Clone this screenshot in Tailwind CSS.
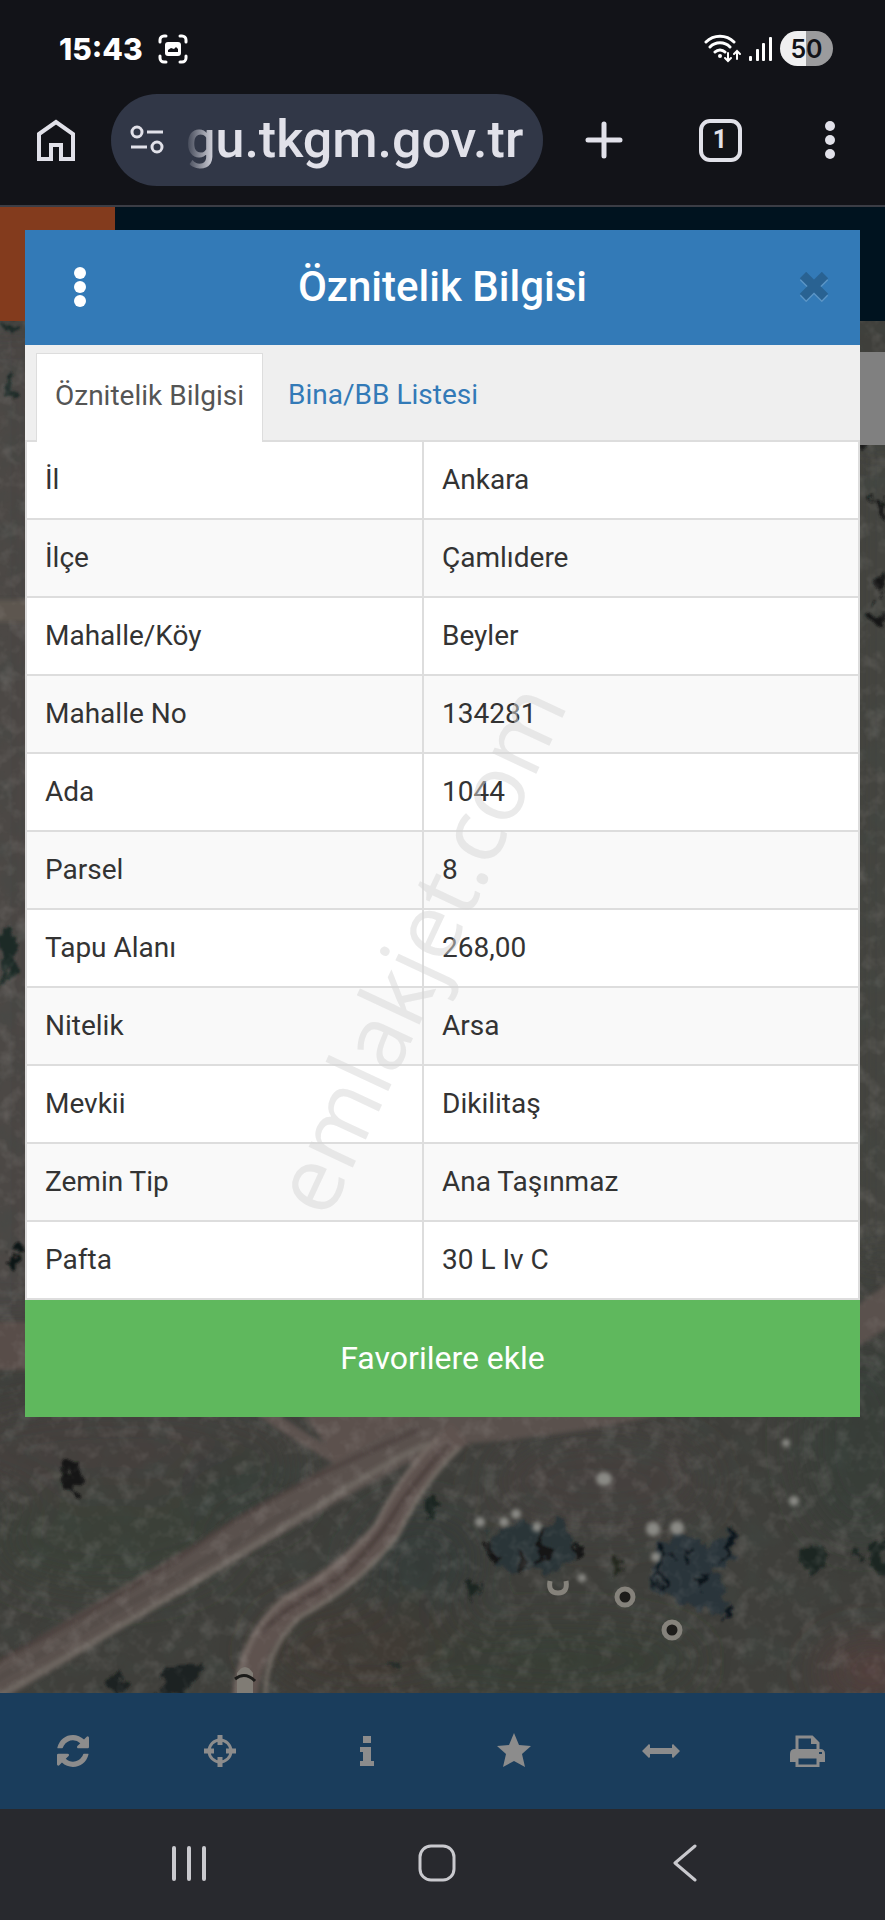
<!DOCTYPE html>
<html lang="tr">
<head>
    <meta charset="UTF-8">
    <meta name="viewport" content="width=device-width, initial-scale=1.0">
    <title>Öznitelik Bilgisi</title>
    <script src="https://cdn.jsdelivr.net/npm/@tailwindcss/browser@4"></script>
</head>
<body class="min-h-screen flex flex-col bg-[#121318] font-['Roboto',sans-serif] text-[#333]">

    <!-- Phone status bar -->
    <div class="h-[94px] pt-[3px] pl-[59px] pr-[52px] flex items-center justify-between text-white">
        <div class="flex items-center gap-[15px]">
            <span class="font-['Inter',sans-serif] font-extrabold text-[30px] leading-9">15:43</span>
            <svg class="w-[30px] h-[30px]" viewBox="0 0 30 30" fill="none" stroke="currentColor" stroke-width="3" stroke-linecap="round">
                <path d="M2 8V6a4 4 0 0 1 4-4h2M22 2h2a4 4 0 0 1 4 4v2M28 22v2a4 4 0 0 1-4 4h-2M8 28H6a4 4 0 0 1-4-4v-2"/>
                <rect x="7" y="8" width="16" height="14" rx="3" fill="currentColor" stroke="none"/>
                <path d="M10 18v-2l3-2 3 1 2-2 2 2v3z" fill="#121318" stroke="none"/>
            </svg>
        </div>
        <div class="flex items-center gap-[7px]">
            <svg class="w-[38px] h-[29px]" viewBox="0 0 38 29" fill="none" stroke="currentColor" stroke-width="3" stroke-linecap="round">
                <path d="M2 8a20 20 0 0 1 28 0M6 13a14 14 0 0 1 20 0M11 18a7 7 0 0 1 10 0"/>
                <circle cx="16" cy="22" r="2" fill="currentColor" stroke="none"/>
                <path d="M24 19v7M21 24l3 3 3-3M33 25v-7M30 20l3-3 3 3" stroke-width="2"/>
            </svg>
            <svg class="w-6 h-6" viewBox="0 0 24 24" fill="currentColor">
                <rect x="0" y="19" width="3" height="5" rx="1"/>
                <rect x="7" y="12" width="3" height="12" rx="1"/>
                <rect x="13" y="6" width="3" height="18" rx="1"/>
                <rect x="20" y="0" width="3" height="24" rx="1"/>
            </svg>
            <span class="w-[53px] h-[35px] rounded-full bg-linear-to-r from-[#efeff0] from-50% to-[#9b9b9d] to-50% flex items-center justify-center font-['Inter',sans-serif] font-semibold text-[25px] leading-8 text-[#121318]">50</span>
        </div>
    </div>

    <!-- Browser toolbar -->
    <header class="pb-[19px] border-b-2 border-[#3b3d45] flex items-center text-[#e1e1e9]">
        <button class="w-[111px] shrink-0 flex justify-start pl-9" aria-label="Ana sayfa">
            <svg class="w-10 h-11" viewBox="0 0 40 44" fill="none" stroke="currentColor" stroke-width="4">
                <path d="M3 16L20 4l17 12v25H25V27H15v14H3z"/>
            </svg>
        </button>
        <div class="relative flex-1 min-w-0 h-[92px] rounded-full bg-[#313747] flex items-center pl-[18px] pr-3 gap-[21px]">
            <svg class="w-9 h-[30px] shrink-0" viewBox="0 0 36 30" fill="none" stroke="currentColor" stroke-width="3">
                <circle cx="8" cy="7" r="5"/>
                <path d="M18 7h16M2 22h16"/>
                <circle cx="28" cy="22" r="5"/>
            </svg>
            <input type="text" value="gu.tkgm.gov.tr" aria-label="Adres" class="w-full min-w-0 bg-transparent outline-none font-medium text-[52px] leading-[60px]">
            <span class="absolute left-[73px] top-4 w-8 h-[60px] bg-linear-to-r from-[#313747] to-[#313747]/0 pointer-events-none"></span>
        </div>
        <button class="w-[122px] shrink-0 flex justify-center" aria-label="Yeni sekme">
            <svg class="w-[38px] h-[38px]" viewBox="0 0 38 38" fill="none" stroke="currentColor" stroke-width="5" stroke-linecap="round">
                <path d="M19 3v32M3 19h32"/>
            </svg>
        </button>
        <button class="w-[110px] shrink-0 flex justify-center" aria-label="Sekmeler">
            <span class="w-[43px] h-[43px] border-4 border-current rounded-[11px] flex items-center justify-center font-bold text-[25px] leading-8">1</span>
        </button>
        <button class="w-[110px] shrink-0 flex justify-center" aria-label="Menü">
            <svg class="w-3 h-10" viewBox="0 0 12 40" fill="currentColor">
                <circle cx="6" cy="6" r="5"/>
                <circle cx="6" cy="20" r="5"/>
                <circle cx="6" cy="34" r="5"/>
            </svg>
        </button>
    </header>

    <main class="relative flex-1 flex flex-col px-[25px] pt-[23px] pb-[276px]">

        <!-- Dimmed page behind the dialog -->
        <div class="absolute inset-0 flex flex-col overflow-hidden">
            <div class="h-[114px] shrink-0 bg-[#00131f]">
                <div class="w-[115px] h-full bg-[#833b1d]"></div>
            </div>
            <div class="relative flex-1 min-h-0 bg-[#3e3e3b]">
                <svg class="absolute inset-0 w-full h-full" viewBox="0 0 885 1372" preserveAspectRatio="xMidYMin slice">
                    <defs>
                        <filter id="soft" x="-20%" y="-20%" width="140%" height="140%"><feGaussianBlur stdDeviation="2"/></filter>
                        <filter id="wide" x="-50%" y="-50%" width="200%" height="200%"><feGaussianBlur stdDeviation="22"/></filter>
                        <!-- breaks up the straight edges of the bushes -->
                        <filter id="ragged" x="-20%" y="-20%" width="140%" height="140%">
                            <feTurbulence type="fractalNoise" baseFrequency="0.07" numOctaves="3" seed="3" result="n"/>
                            <feDisplacementMap in="SourceGraphic" in2="n" scale="28" xChannelSelector="R" yChannelSelector="G"/>
                            <feGaussianBlur stdDeviation="1"/>
                        </filter>
                        <filter id="rough" x="0" y="0" width="100%" height="100%">
                            <feTurbulence type="fractalNoise" baseFrequency="0.035" numOctaves="4" seed="7"/>
                            <feColorMatrix values="0 0 0 0 0.05  0 0 0 0 0.07  0 0 0 0 0.06  2 0 0 0 -0.9"/>
                        </filter>
                        <filter id="light" x="0" y="0" width="100%" height="100%">
                            <feTurbulence type="fractalNoise" baseFrequency="0.06" numOctaves="3" seed="21"/>
                            <feColorMatrix values="0 0 0 0 0.5  0 0 0 0 0.47  0 0 0 0 0.45  1.6 0 0 0 -0.75"/>
                        </filter>
                    </defs>
                    <rect width="885" height="1372" fill="#3f3f3b"/>
                    <g filter="url(#wide)">
                        <rect x="-40" y="0" width="90" height="1000" fill="#4b4744"/>
                        <rect x="850" y="120" width="80" height="820" fill="#454440"/>
                        <ellipse cx="120" cy="1130" rx="180" ry="50" fill="#443f3e"/>
                        <ellipse cx="110" cy="1220" rx="120" ry="50" fill="#3a3f39"/>
                        <ellipse cx="240" cy="1165" rx="60" ry="40" fill="#383e37"/>
                        <ellipse cx="420" cy="1240" rx="60" ry="50" fill="#363b38"/>
                        <ellipse cx="370" cy="1330" rx="110" ry="50" fill="#3f3a36"/>
                        <ellipse cx="560" cy="1340" rx="140" ry="35" fill="#373c36"/>
                        <ellipse cx="600" cy="1160" rx="110" ry="50" fill="#443f3c"/>
                        <ellipse cx="860" cy="1120" rx="60" ry="100" fill="#383c38"/>
                        <ellipse cx="870" cy="1350" rx="50" ry="30" fill="#54403c"/>
                    </g>
                    <rect width="885" height="1372" filter="url(#rough)" opacity="0.4"/>
                    <!-- dirt roads -->
                    <g fill="none" filter="url(#soft)">
                        <path d="M-20 1025H40" stroke="#594d4a" stroke-width="48"/>
                        <path d="M-20 290H40" stroke="#5d5650" stroke-width="22"/>
                        <path d="M262 1090q50 34 80 50" stroke="#5d5350" stroke-width="12"/>
                        <path d="M300 1088Q400 1095 590 1092Q480 1106 447 1126Q420 1150 340 1145Z" fill="#5c514e"/>
                        <path d="M-20 1372Q140 1275 300 1182T460 1105Q600 1095 720 1060T900 975" stroke="#5a514d" stroke-width="36"/>
                        <path d="M-20 1350Q130 1272 200 1222T420 1108" stroke="#4b413d" stroke-width="4"/>
                        <path d="M-10 1362Q150 1272 300 1184" stroke="#4f4844" stroke-width="3"/>
                        <path d="M-10 1380Q150 1290 300 1196T430 1130" stroke="#6d6660" stroke-width="6"/>
                        <path d="M244 1380Q250 1320 290 1286Q350 1250 385 1210Q415 1150 460 1112" stroke="#5e5350" stroke-width="26"/>
                        <path d="M236 1380Q240 1318 282 1280Q340 1250 376 1204Q402 1150 440 1116" stroke="#756b65" stroke-width="4"/>
                        <path d="M266 1380Q262 1332 300 1296Q362 1262 398 1214Q424 1160 460 1126" stroke="#746d66" stroke-width="4"/>
                        <path d="M262 1310Q282 1290 318 1270T388 1202Q410 1165 450 1122" stroke="#463b38" stroke-width="4"/>
                    </g>
                    <!-- bushes -->
                    <g filter="url(#ragged)">
                        <path d="M66 1142l8-3 6 10 2 16-8 8-5-12-4-8z" fill="#141816"/>
                        <path d="M494 1212l22-12 22 6 20-8 12 12 4 28-20 16-28-8-26 4-10-14z" fill="#2b3539"/>
                        <path d="M486 1214l8 4 2 20-6 4-5-14zM540 1205l8 24-14 16zM570 1222l14 4-6 12zM520 1232l10 8-8 10z" fill="#121615"/>
                        <path d="M656 1226l24-12 32 8 22-10-6 26-14 18 18 26-22 10-30-14-26-4z" fill="#29363b"/>
                        <path d="M660 1230l8-4-2 34-10 14zM698 1250l12 6-8 14zM728 1218l8-8-8 22-14 14zM722 1284l12 4-8 10zM684 1226l10 8-8 8z" fill="#10181c"/>
                        <path d="M800 1232l14-12 14 16-10 10-14 8zM846 1232l14-8 4 14zM868 1220l17-2v34l-14-4z" fill="#1f2623"/>
                        <path d="M464 1260l14 4-6 18zM422 1180l14-6 6 8-16 16z" fill="#1d2520"/>
                        <path d="M612 1240l8-10v24l-8 4z" fill="#22261f"/>
                        <path d="M100 1365l20-16 4 22zM160 1355l40-12-8 26-34 6z" fill="#1d2421"/>
                        <path d="M386 1348l14-8-4 16z" fill="#252d29"/>
                        <path d="M-2 0h18v8H0zM4 55l10 6v18H4zM0 608l20 12v30L4 660z" fill="#1d2b27"/>
                        <path d="M0 940l14-14 8 14-12 12z" fill="#101513"/>
                        <path d="M862 110l12-6 4 8-16 14zM872 172l13 8v24zM870 262l15-10v20zM866 290l8-6 11 16-8 4z" fill="#121514"/>
                    </g>
                    <rect width="885" height="1372" filter="url(#light)" opacity="0.25"/>
                    <!-- stones and rings -->
                    <g fill="#8a8a85" filter="url(#soft)">
                        <circle cx="480" cy="1201" r="5"/><circle cx="504" cy="1201" r="5"/><circle cx="516" cy="1193" r="5"/><circle cx="537" cy="1206" r="5"/>
                        <circle cx="653" cy="1208" r="7"/><circle cx="677" cy="1207" r="7"/><circle cx="656" cy="1236" r="5"/><ellipse cx="604" cy="1158" rx="8" ry="7"/>
                        <circle cx="582" cy="1257" r="4"/><circle cx="786" cy="1122" r="4"/><circle cx="794" cy="1180" r="5"/>
                    </g>
                    <g fill="#1d1c1a" stroke="#85827b" stroke-width="5">
                        <circle cx="625" cy="1276" r="8"/>
                        <circle cx="672" cy="1309" r="8"/>
                        <path d="M550 1260q-2 12 8 12t8-12" fill="none"/>
                    </g>
                    <path d="M237 1372v-20q8-12 16 0v20z" fill="#807c75"/>
                    <path d="M235 1358q10-8 20 2" stroke="#1b1b19" stroke-width="3" fill="none"/>
                </svg>
                <div class="absolute right-0 top-[31px] w-20 h-[93px] bg-[#808080]"></div>
            </div>
        </div>

        <!-- Attribute dialog -->
        <section class="relative bg-white">
            <div class="h-[115px] pb-[2px] bg-[#337ab7] text-white grid grid-cols-[110px_1fr_110px] items-center">
                <button class="flex justify-center" aria-label="Seçenekler">
                    <svg class="w-3 h-10" viewBox="0 0 12 40" fill="currentColor">
                        <circle cx="6" cy="6" r="6"/>
                        <circle cx="6" cy="20" r="6"/>
                        <circle cx="6" cy="34" r="6"/>
                    </svg>
                </button>
                <h1 class="text-center font-medium text-[42px] leading-[48px]">Öznitelik Bilgisi</h1>
                <button class="justify-self-end pr-[31px]" aria-label="Kapat">
                    <svg class="w-[30px] h-[30px]" viewBox="0 0 30 30" fill="none" stroke-width="9">
                        <path d="M4 5l22 22M26 5L4 27" stroke="#5b95c6"/>
                        <path d="M4 3l22 22M26 3L4 25" stroke="#296292"/>
                    </svg>
                </button>
            </div>

            <nav class="h-[97px] pl-[11px] pt-2 bg-[#efefef] border-b-2 border-[#ddd] flex text-[28px] leading-8">
                <a href="#" class="-mb-[2px] px-[18px] pb-[5px] flex items-center bg-white border border-b-0 border-[#ddd] text-[#555]">Öznitelik Bilgisi</a>
                <a href="#" class="px-[25px] pb-1 flex items-center text-[#337ab7]">Bina/BB Listesi</a>
            </nav>

            <div class="relative overflow-hidden">
                <table class="w-full border-separate border-spacing-0 border-x-2 border-[#ddd] table-fixed text-[28px] leading-8 text-left [&_th]:h-[78px] [&_th]:pl-[18px] [&_th]:font-normal [&_th]:border-b-2 [&_th]:border-[#ddd] [&_td]:pl-[18px] [&_td]:border-l-2 [&_td]:border-b-2 [&_td]:border-[#ddd]">
                    <colgroup>
                        <col class="w-[395px]">
                        <col>
                    </colgroup>
                    <tbody>
                        <tr><th scope="row">İl</th><td>Ankara</td></tr>
                        <tr class="bg-[#f9f9f9]"><th scope="row">İlçe</th><td>Çamlıdere</td></tr>
                        <tr><th scope="row">Mahalle/Köy</th><td>Beyler</td></tr>
                        <tr class="bg-[#f9f9f9]"><th scope="row">Mahalle No</th><td>134281</td></tr>
                        <tr><th scope="row">Ada</th><td>1044</td></tr>
                        <tr class="bg-[#f9f9f9]"><th scope="row">Parsel</th><td>8</td></tr>
                        <tr><th scope="row">Tapu Alanı</th><td>268,00</td></tr>
                        <tr class="bg-[#f9f9f9]"><th scope="row">Nitelik</th><td>Arsa</td></tr>
                        <tr><th scope="row">Mevkii</th><td>Dikilitaş</td></tr>
                        <tr class="bg-[#f9f9f9]"><th scope="row">Zemin Tip</th><td>Ana Taşınmaz</td></tr>
                        <tr><th scope="row">Pafta</th><td>30 L Iv C</td></tr>
                    </tbody>
                </table>
                <span class="absolute left-[47%] top-[59%] -translate-x-1/2 -translate-y-1/2 -rotate-65 pointer-events-none whitespace-nowrap font-['Open_Sans',sans-serif] text-[91px] leading-none text-[#d6d6d6]/50">emlakjet.com</span>
            </div>

            <button class="w-full h-[117px] pb-[2px] bg-[#5fb85d] text-white text-[32px] leading-10">Favorilere ekle</button>
        </section>
    </main>

    <!-- Map tools -->
    <nav class="h-[116px] pr-1 bg-[#1a3d5c] text-[#8c8c8c] grid grid-cols-6 items-center justify-items-center">
        <button aria-label="Yenile">
            <svg class="w-8 h-8" viewBox="0 0 1536 1536" fill="currentColor">
                <path d="M1511 928q0 5-1 7-64 268-268 434.500T764 1536q-146 0-282.500-55T238 1324l-129 129q-19 19-45 19t-45-19-19-45V960q0-26 19-45t45-19h448q26 0 45 19t19 45-19 45l-137 137q71 66 161 102t187 36q134 0 250-65t186-179q11-17 53-117 8-23 30-23h192q13 0 22.500 9.500t9.500 22.500zm25-800v448q0 26-19 45t-45 19h-448q-26 0-45-19t-19-45 19-45l138-138Q969 256 768 256q-134 0-250 65T332 500q-11 17-53 117-8 23-30 23H50q-13 0-22.500-9.500T18 608v-7q65-268 270-434.500T768 0q146 0 284 55.500T1297 212l130-129q19-19 45-19t45 19 19 45z"/>
            </svg>
        </button>
        <button aria-label="Konum">
            <svg class="w-8 h-8" viewBox="0 0 32 32" fill="none" stroke="currentColor">
                <circle cx="16" cy="16" r="11" stroke-width="3"/>
                <path d="M16 0v10M16 22v10M0 16h10M22 16h10" stroke-width="5"/>
            </svg>
        </button>
        <button aria-label="Bilgi">
            <svg class="w-4 h-8" viewBox="0 0 16 32" fill="currentColor">
                <path d="M4 1h8v7H4zM1 12h11v14h3v5H1v-5h3v-9H1z"/>
            </svg>
        </button>
        <button aria-label="Favoriler">
            <svg class="w-9 h-9" viewBox="0 0 36 36" fill="currentColor">
                <path d="M18 0l5 12 12 1-9 8 3 13-11-6-11 6 3-13-9-8 12-1z"/>
            </svg>
        </button>
        <button aria-label="Ölçüm">
            <svg class="w-[38px] h-4" viewBox="0 0 38 16" fill="currentColor">
                <path d="M0 8l7-7 1 1v3h22V2l1-1 7 7-7 7-1-1v-3H8v3l-1 1z"/>
            </svg>
        </button>
        <button aria-label="Yazdır">
            <svg class="w-9 h-8" viewBox="0 0 36 32" fill="none" stroke="currentColor" stroke-width="3">
                <path d="M7 16V2h15l6 6v8"/>
                <path d="M21 2v7h7z" fill="currentColor" stroke="none"/>
                <path d="M0 19q0-5 5-5h25q5 0 5 5v8h-6v-5H6v5H0zM29 17v2h3v-2z" fill="currentColor" fill-rule="evenodd" stroke="none"/>
                <path d="M7 22v9h21v-9z"/>
            </svg>
        </button>
    </nav>

    <!-- Android navigation -->
    <nav class="h-[111px] pr-[11px] pb-1 bg-[#28292e] text-[#c9c9ce] flex items-center justify-center">
        <button class="w-[248px] flex justify-center" aria-label="Son uygulamalar">
            <svg class="w-9 h-9" viewBox="0 0 36 36" fill="none" stroke="currentColor" stroke-width="4" stroke-linecap="round">
                <path d="M3 3v31M18 3v31M33 3v31"/>
            </svg>
        </button>
        <button class="w-[248px] flex justify-center" aria-label="Ana ekran">
            <svg class="w-[38px] h-[38px]" viewBox="0 0 38 38" fill="none" stroke="currentColor" stroke-width="3">
                <rect x="2" y="2" width="34" height="34" rx="11"/>
            </svg>
        </button>
        <button class="w-[248px] flex justify-center" aria-label="Geri">
            <svg class="w-6 h-[38px]" viewBox="0 0 24 38" fill="none" stroke="currentColor" stroke-width="3" stroke-linecap="round" stroke-linejoin="round">
                <path d="M22 2L2 19l20 17"/>
            </svg>
        </button>
    </nav>
</body>
</html>
